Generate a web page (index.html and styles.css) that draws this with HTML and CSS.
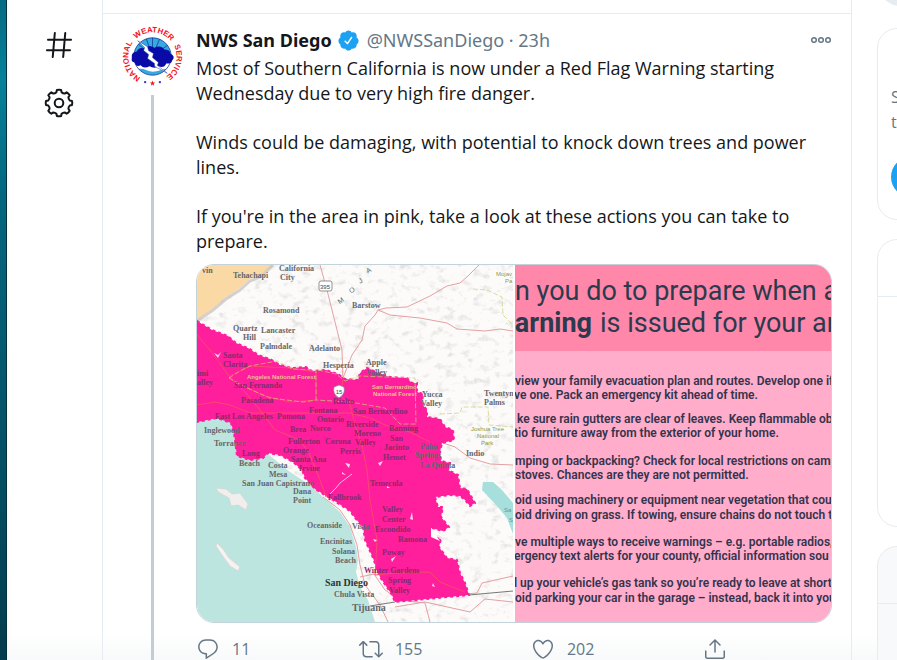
FILE: index.html
```html
<!DOCTYPE html>
<html lang="en">
<head>
  <meta charset="UTF-8">
  <meta name="viewport" content="width=device-width, initial-scale=1.0">
  <title>NWS San Diego on Twitter</title>
  <link rel="stylesheet" href="styles.css">
</head>
<body>
  <div class="desktop-edge"></div>

  <!-- Left navigation -->
  <nav class="nav">
    <a href="#explore" aria-label="Explore">
      <svg class="nav-icon" viewBox="0 0 24 24"><path d="M21 7.337h-3.93l.372-4.272c.036-.412-.27-.775-.682-.812-.417-.03-.776.27-.812.683l-.383 4.4h-6.32l.37-4.27c.037-.413-.27-.776-.68-.813-.42-.03-.777.27-.813.683l-.382 4.4H3.782c-.414 0-.75.337-.75.75s.336.75.75.75H7.61l-.55 6.327H3c-.414 0-.75.336-.75.75s.336.75.75.75h3.93l-.372 4.272c-.036.412.27.775.682.812l.066.003c.385 0 .712-.295.746-.686l.383-4.4h6.32l-.37 4.27c-.036.413.27.776.682.813l.066.003c.385 0 .712-.295.746-.686l.382-4.4h3.957c.413 0 .75-.337.75-.75s-.337-.75-.75-.75H16.39l.55-6.327H21c.414 0 .75-.336.75-.75s-.336-.75-.75-.75zm-6.115 7.826h-6.32l.55-6.326h6.32l-.55 6.326z"/></svg>
    </a>
    <a href="#settings" aria-label="Settings">
      <svg class="nav-icon gear" viewBox="-16 -16 32 32">
        <path d="M-2.1 -13Q0 -13.6 2.1 -13L2.6 -10.7Q3.9 -9.4 5.7 -9.4L7.7 -10.7Q9.6 -9.6 10.7 -7.7L9.4 -5.7Q9.4 -3.9 10.7 -2.6L13 -2.1Q13.6 0 13 2.1L10.7 2.6Q9.4 3.9 9.4 5.7L10.7 7.7Q9.6 9.6 7.7 10.7L5.7 9.4Q3.9 9.4 2.6 10.7L2.1 13Q0 13.6 -2.1 13L-2.6 10.7Q-3.9 9.4 -5.7 9.4L-7.7 10.7Q-9.6 9.6 -10.7 7.7L-9.4 5.7Q-9.4 3.9 -10.7 2.6L-13 2.1Q-13.6 0 -13 -2.1L-10.7 -2.6Q-9.4 -3.9 -9.4 -5.7L-10.7 -7.7Q-9.6 -9.6 -7.7 -10.7L-5.7 -9.4Q-3.9 -9.4 -2.6 -10.7Z"/>
        <circle r="4.3"/>
      </svg>
    </a>
  </nav>

  <!-- Timeline -->
  <main class="timeline">
    <article class="tweet">
      <div class="thread">
        <svg class="avatar" viewBox="-31 -31 62 62">
          <defs>
            <path id="ring" d="M0 24.5A24.5 24.5 0 0 1 0 -24.5A24.5 24.5 0 0 1 0 24.5"/>
            <clipPath id="disc"><circle r="19"/></clipPath>
          </defs>
          <circle r="20" fill="#fff"/>
          <g clip-path="url(#disc)">
            <rect x="-20" y="-20" width="40" height="22" fill="#35a9e0"/>
            <path d="M0 0L-16 -14M0 0L-7 -20M0 0V-20M0 0L8 -20M0 0L16 -12" stroke="#123a9c" stroke-width=".8"/>
            <rect x="-20" y="9" width="40" height="12" fill="#fff"/>
            <path d="M-20 14Q-12 11 -6 14T8 14T20 13V20H-20Z" fill="#35a9e0"/>
          </g>
          <circle r="19" fill="none" stroke="#123a9c" stroke-width=".8"/>
          <path d="M-21 1Q-22 -4 -16 -5Q-14 -10 -8 -8Q-4 -13 2 -9Q9 -12 12 -7Q18 -7 18 -3Q24 0 20 4Q19 8 14 7Q12 12 6 10Q2 13 -3 10Q-9 13 -12 9Q-17 11 -18 6Q-22 6 -21 1Z" fill="#0a0aa8"/>
          <path d="M-15 -16L-5 -10L-4 -6L1 -3L0 1L6 6L5 9L15 17L2 10L2 7L-5 2L-4 -2L-9 -6L-8 -9Z" fill="#fff" stroke="#123a9c" stroke-width=".5"/>
          <g class="ring-text">
            <text><textPath href="#ring" startOffset="21.5%">NATIONAL</textPath></text>
            <text><textPath href="#ring" startOffset="51%">WEATHER</textPath></text>
            <text><textPath href="#ring" startOffset="79%">SERVICE</textPath></text>
          </g>
          <path d="M0 24.5L.7 26.5H2.7L1.1 27.7L1.7 29.7L0 28.5L-1.7 29.7L-1.1 27.7L-2.7 26.5H-.7Z" fill="#f0141c"/>
          <circle cx="-7.5" cy="26" r="1.2" fill="#3a35c8"/>
          <circle cx="7.5" cy="26" r="1.2" fill="#3a35c8"/>
        </svg>
        <div class="thread-line"></div>
      </div>

      <div class="tweet-body">
        <header class="tweet-header">
          <a class="name" href="#profile">NWS San Diego</a>
          <svg class="verified" viewBox="0 0 24 24"><path d="M22.5 12.5c0-1.58-.875-2.95-2.148-3.6.154-.435.238-.905.238-1.4 0-2.21-1.71-3.998-3.818-3.998-.47 0-.92.084-1.336.25C14.818 2.415 13.51 1.5 12 1.5s-2.816.917-3.437 2.25c-.415-.165-.866-.25-1.336-.25-2.11 0-3.818 1.79-3.818 4 0 .494.083.964.237 1.4-1.272.65-2.147 2.018-2.147 3.6 0 1.495.782 2.798 1.942 3.486-.02.17-.032.34-.032.514 0 2.21 1.708 4 3.818 4 .47 0 .92-.086 1.335-.25.62 1.334 1.926 2.25 3.437 2.25 1.512 0 2.818-.916 3.437-2.25.415.163.865.248 1.336.248 2.11 0 3.818-1.79 3.818-4 0-.174-.012-.344-.033-.513 1.158-.687 1.943-1.99 1.943-3.484zm-6.616-3.334l-4.334 6.5c-.145.217-.382.334-.625.334-.143 0-.288-.04-.416-.126l-.115-.094-2.415-2.415c-.293-.293-.293-.768 0-1.06s.768-.294 1.06 0l1.77 1.767 3.825-5.74c.23-.345.696-.436 1.04-.207.346.23.44.696.21 1.04z"/></svg>
          <span class="handle">@NWSSanDiego · 23h</span>
          <button class="more" aria-label="More">
            <svg viewBox="0 0 22 8"><circle cx="4" cy="4" r="2.3"/><circle cx="11" cy="4" r="2.3"/><circle cx="18" cy="4" r="2.3"/></svg>
          </button>
        </header>

        <div class="tweet-text">
          <p>Most of Southern California is now under a Red Flag Warning starting Wednesday due to very high fire danger.</p>
          <p>Winds could be damaging, with potential to knock down trees and power lines.</p>
          <p>If you're in the area in pink, take a look at these actions you can take to prepare.</p>
        </div>

        <div class="photos">
          <!-- Warning area map -->
          <svg class="photo map" viewBox="197 265 316 357" preserveAspectRatio="xMidYMid slice">
            <defs>
              <filter id="relief" x="0" y="0" width="100%" height="100%">
                <feTurbulence type="fractalNoise" baseFrequency=".11 .14" numOctaves="4" seed="8"/>
                <feColorMatrix values="0 0 0 0 .6  0 0 0 0 .59  0 0 0 0 .57  2.4 0 0 0 -1.3"/>
              </filter>
            </defs>
            <rect x="197" y="265" width="316" height="357" fill="#fcfbfa"/>
            <rect x="197" y="265" width="316" height="357" filter="url(#relief)" opacity=".7"/>
            <path d="M197 265H273L262 274L250 279L240 288L226 297L213 308L197 320Z" fill="#fbd9a5"/>
            <path d="M273 265L262 276L250 281L240 290L226 299L213 310L197 321" fill="none" stroke="#b9b5b0" stroke-width="3" opacity=".6"/>
            <!-- ocean and Salton Sea -->
            <path d="M197 418H235L250 455L268 454L290 472L313 487L323 497L340 512L350 527L356 547L358 560L356 572L360 587L368 600L375 622H197Z" fill="#bde5df"/>
            <path d="M483 482L493 482L502 490L513 503V534L507 518L497 506L482 490Z" fill="#a6dfdb"/>
            <path d="M216 488L226 489L232 494L240 493L248 504L246 510L238 505L231 506L229 498L218 492Z" fill="#f0efed" stroke="#d5d2ce" stroke-width=".7"/>
            <path d="M217 543L223 549L229 558L240 567L238 571L230 566L222 555L216 546Z" fill="#f4f3f1" stroke="#d5d2ce" stroke-width=".7"/>
            <!-- roads outside of the area -->
            <g class="road">
              <path d="M320 265L327 290L334 318L342 350L343 380"/>
              <path d="M343 378L352 355L362 340L365 326L375 315L378 310L386 308L407 307L430 296L447 286L460 283L468 276L479 265"/>
              <path d="M378 310L390 315L420 318L447 323L457 329L485 331L500 329L513 331"/>
              <path d="M323 497L340 510L350 525L357 545L360 565L365 585L380 605L388 622M360 577L374 574L385 590L400 600L425 603L430 622"/>
              <path d="M440 442L455 447L470 458L490 464L513 465M466 594L477 593L482 583L513 576M395 607L425 602L470 612L485 599L513 602"/>
            </g>
            <!-- red flag warning area -->
            <path class="zone" d="M197 321L212 330L228 336L236 343L250 349L258 355L270 359L280 365L292 368L306 367L312 371L326 370L338 374L345 379L358 380L360 373L367 368L378 373L390 377L407 378L412 383L417 383L417 392L423 394L422 404L427 410L427 417L440 419L445 427L453 430L454 440L442 443L440 452L441 461L450 463L448 470L458 475L460 488L467 489L475 503L470 506L465 500L460 496L450 495L435 497L438 507L443 507L441 517L449 527L443 531L431 528L431 537L441 539L439 547L447 558L457 560L460 573L465 583L469 595L395 602L392 595L380 577L373 558L365 540L363 527L355 518L350 511L333 500L315 489L305 478L302 470L293 462L280 455L268 453L263 458L250 460L237 456L234 433L231 423L217 418L197 422Z"/>
            <path d="M431 528L445 538L434 533L440 541L431 537Z" fill="#fff"/>
            <g class="zone-road">
              <path d="M197 335L210 350L229 376L245 392L260 410L275 430L300 440L310 455L320 480L326 497"/>
              <path d="M197 405L215 402L230 405L250 413L350 413L370 418L385 425L410 432L430 442"/>
              <path d="M343 380L340 395L350 405L355 425L362 445L367 470L370 500L377 540L375 575L395 573L430 572L440 582L465 592"/>
              <path d="M230 376L250 366L290 368L316 372L316 400L290 402L262 395L232 380"/>
            </g>
            <g class="forest-line">
              <path d="M229 378L240 371L250 366L277 361L292 369L316 370V400L303 402L270 398L245 387Z"/>
              <path d="M318 370L336 374L345 381L360 376L415 378L416 424L400 424L385 408L350 402L316 400"/>
              <path d="M440 414L460 413L462 407H488L489 425L513 427M473 289L487 290L502 297L503 315L513 325"/>
            </g>
            <path d="M469 595L513 591M395 602L370 606" stroke="#777" stroke-width="1" fill="none"/>
            <g fill="#fbd3ee">
              <path d="M214 353L218 358L221 352L218 355Z"/><path d="M412 512L413 520L410 519Z"/><path d="M345 463L350 464L349 468Z"/><path d="M342 472L346 475L342 474Z"/><path d="M378 463L383 461L380 466Z"/><path d="M387 486L390 488L387 488Z"/><path d="M373 539L377 540L375 542Z"/><path d="M433 583L435 587L432 586Z"/><path d="M391 559L396 556L392 562Z"/>
            </g>
            <path d="M330 494L336 488L340 483L352 474" stroke="#f4bedd" fill="none"/>
            <!-- highway shields -->
            <rect x="319" y="281" width="13" height="10" rx="2" fill="#fff" stroke="#777" stroke-width=".8"/>
            <text class="shield" x="325" y="289">395</text>
            <path d="M334 387L339 385L344 387Q346 394 339 398Q332 394 334 387Z" fill="#fff" stroke="#8b7b99" stroke-width=".8"/>
            <text class="shield" x="339" y="394">15</text>

            <g class="labels">
              <text x="202" y="273">vin</text><text x="233" y="278">Tehachapi</text>
              <text x="279" y="271">California</text><text x="280" y="280">City</text>
              <text x="263" y="313">Rosamond</text><text x="352" y="308">Barstow</text>
              <text x="233" y="331">Quartz</text><text x="243" y="340">Hill</text>
              <text x="261" y="333">Lancaster</text><text x="260" y="349">Palmdale</text>
              <text x="309" y="351">Adelanto</text><text x="323" y="368">Hesperia</text>
              <text x="366" y="365">Apple</text><text x="366" y="375">Valley</text>
              <text x="422" y="397">Yucca</text><text x="421" y="406">Valley</text>
              <text x="484" y="396">Twentyn</text><text x="484" y="405">Palms</text>
              <text x="204" y="433">Inglewood</text><text x="214" y="446">Torrance</text>
              <text x="239" y="466">Beach</text><text x="268" y="468">Costa</text>
              <text x="269" y="477">Mesa</text><text x="242" y="486">San Juan Capistrano</text>
              <text x="293" y="494">Dana</text><text x="293" y="503">Point</text>
              <text x="307" y="528">Oceanside</text><text x="352" y="529">Vista</text>
              <text x="320" y="544">Encinitas</text><text x="332" y="554">Solana</text>
              <text x="335" y="563">Beach</text><text x="334" y="597">Chula Vista</text>
              <text x="466" y="456">Indio</text><text x="420" y="449">Palm</text>
              <text x="415" y="458">Springs</text><text x="420" y="468">La Quinta</text>
              <text class="city" x="325" y="586">San Diego</text>
              <text class="town" x="352" y="611">Tijuana</text>
            </g>
            <g class="labels inside">
              <text x="223" y="358">Santa</text><text x="223" y="367">Clarita</text>
              <text x="197" y="376">imi</text><text x="197" y="385">alley</text>
              <text x="234" y="388">San Fernando</text><text x="241" y="403">Pasadena</text>
              <text x="215" y="419">East Los Angeles</text><text x="277" y="419">Pomona</text>
              <text x="309" y="413">Fontana</text><text x="333" y="404">Rialto</text>
              <text x="317" y="422">Ontario</text><text x="353" y="414">San Bernardino</text>
              <text x="290" y="432">Brea</text><text x="310" y="431">Norco</text>
              <text x="346" y="427">Riverside</text><text x="354" y="436">Moreno</text>
              <text x="389" y="431">Banning</text><text x="390" y="441">San</text>
              <text x="355" y="445">Valley</text><text x="384" y="450">Jacinto</text>
              <text x="383" y="460">Hemet</text><text x="288" y="444">Fullerton</text>
              <text x="325" y="444">Corona</text><text x="283" y="453">Orange</text>
              <text x="291" y="462">Santa Ana</text><text x="299" y="471">Irvine</text>
              <text x="340" y="454">Perris</text><text x="242" y="456">Long</text>
              <text x="370" y="486">Temecula</text><text x="328" y="500">Fallbrook</text>
              <text x="382" y="512">Valley</text><text x="382" y="522">Center</text>
              <text x="375" y="532">Escondido</text><text x="398" y="542">Ramona</text>
              <text x="382" y="555">Poway</text><text x="364" y="573">Winter Gardens</text>
              <text x="388" y="583">Spring</text><text x="389" y="593">Valley</text>
            </g>
            <g class="desert">
              <text x="338" y="303" transform="rotate(-35 341 301)">M</text><text x="349" y="293" transform="rotate(-30 351 290)">O</text><text x="359" y="283" transform="rotate(-30 361 281)">J</text><text x="366" y="273" transform="rotate(-30 368 270)">A</text>
            </g>
            <g class="park">
              <text x="496" y="276">Mojav</text><text x="505" y="283">Pa</text>
              <text x="471" y="431">Joshua Tree</text><text x="477" y="438">National</text><text x="481" y="445">Park</text>
              <text class="forest" x="247" y="379">Angeles National Forest</text>
              <text class="forest" x="372" y="389">San Bernardino</text><text class="forest" x="373" y="396">National Forest</text>
              <text class="lake" x="504" y="512">Sa</text><text class="lake" x="509" y="522">S</text>
            </g>
          </svg>

          <!-- Safety tips flyer -->
          <svg class="photo flyer" viewBox="515 265 316 357" preserveAspectRatio="xMidYMid slice">
            <rect x="515" y="265" width="316" height="357" fill="#ffadcb"/>
            <rect x="515" y="265" width="316" height="86" fill="#ff87a9"/>
            <g class="flyer-title">
              <text x="515" y="300">n you do to prepare when a</text>
              <text x="592" y="332" text-anchor="end" font-weight="700">Warning</text>
              <text x="600" y="332">is issued for your ar</text>
            </g>
            <g class="flyer-text">
              <text x="515" y="385">view your family evacuation plan and routes. Develop one if</text>
              <text x="514" y="399">ve one. Pack an emergency kit ahead of time.</text>
              <text x="517" y="423">ke sure rain gutters are clear of leaves. Keep flammable ob</text>
              <text x="514" y="437">tio furniture away from the exterior of your home.</text>
              <text x="515" y="465">mping or backpacking? Check for local restrictions on camp</text>
              <text x="515" y="479">stoves. Chances are they are not permitted.</text>
              <text x="515" y="504">oid using machinery or equipment near vegetation that coul</text>
              <text x="515" y="519">oid driving on grass. If towing, ensure chains do not touch th</text>
              <text x="515" y="546">ve multiple ways to receive warnings – e.g. portable radios,</text>
              <text x="514" y="560">ergency text alerts for your county, official information sou</text>
              <text x="514" y="587">l up your vehicle’s gas tank so you’re ready to leave at short</text>
              <text x="515" y="602">oid parking your car in the garage – instead, back it into you</text>
            </g>
          </svg>
        </div>

        <div class="actions">
          <button aria-label="Reply">
            <svg viewBox="0 0 24 24"><path d="M14.046 2.242l-4.148-.01h-.002c-4.374 0-7.8 3.427-7.8 7.802 0 4.098 3.186 7.206 7.465 7.37v3.828c0 .108.044.286.12.403.142.225.384.347.632.347.138 0 .277-.038.402-.118.264-.168 6.473-4.14 8.088-5.506 1.902-1.61 3.04-3.97 3.043-6.312v-.017c-.006-4.367-3.43-7.787-7.8-7.788zm3.787 12.972c-1.134.96-4.862 3.405-6.772 4.643V16.67c0-.414-.335-.75-.75-.75h-.396c-3.66 0-6.318-2.476-6.318-5.886 0-3.534 2.768-6.302 6.3-6.302l4.147.01h.002c3.532 0 6.3 2.766 6.302 6.296-.003 1.91-.942 3.844-2.514 5.176z"/></svg>
            <span>11</span>
          </button>
          <button aria-label="Retweet">
            <svg viewBox="0 0 24 24"><path d="M23.77 15.67c-.292-.293-.767-.293-1.06 0l-2.22 2.22V7.65c0-2.068-1.683-3.75-3.75-3.75h-5.85c-.414 0-.75.336-.75.75s.336.75.75.75h5.85c1.24 0 2.25 1.01 2.25 2.25v10.24l-2.22-2.22c-.293-.293-.768-.293-1.06 0s-.294.768 0 1.06l3.5 3.5c.145.147.337.22.53.22s.383-.072.53-.22l3.5-3.5c.294-.292.294-.767 0-1.06zm-10.66 3.28H7.26c-1.24 0-2.25-1.01-2.25-2.25V6.46l2.22 2.22c.148.147.34.22.532.22s.384-.073.53-.22c.293-.293.293-.768 0-1.06l-3.5-3.5c-.293-.294-.768-.294-1.06 0l-3.5 3.5c-.294.292-.294.767 0 1.06s.767.293 1.06 0l2.22-2.22V16.7c0 2.068 1.683 3.75 3.75 3.75h5.85c.414 0 .75-.336.75-.75s-.337-.75-.75-.75z"/></svg>
            <span>155</span>
          </button>
          <button aria-label="Like">
            <svg viewBox="0 0 24 24"><path d="M12 21.638h-.014C9.403 21.59 1.95 14.856 1.95 8.478c0-3.064 2.525-5.754 5.403-5.754 2.29 0 3.83 1.58 4.646 2.73.814-1.148 2.354-2.73 4.645-2.73 2.88 0 5.404 2.69 5.404 5.755 0 6.376-7.454 13.11-10.037 13.157H12zM7.354 4.225c-2.08 0-3.903 1.988-3.903 4.255 0 5.74 7.034 11.596 8.55 11.658 1.518-.062 8.55-5.917 8.55-11.658 0-2.267-1.823-4.255-3.903-4.255-2.528 0-3.94 2.936-3.952 2.965-.23.562-1.156.562-1.387 0-.014-.03-1.425-2.965-3.954-2.965z"/></svg>
            <span>202</span>
          </button>
          <button aria-label="Share">
            <svg viewBox="0 0 24 24"><path d="M17.53 7.47l-5-5c-.293-.293-.768-.293-1.06 0l-5 5c-.294.293-.294.768 0 1.06s.767.294 1.06 0l3.72-3.72V15c0 .414.336.75.75.75s.75-.336.75-.75V4.81l3.72 3.72c.146.147.338.22.53.22s.384-.072.53-.22c.293-.293.293-.767 0-1.06z"/><path d="M19.708 21.944H4.292C3.028 21.944 2 20.916 2 19.652V14c0-.414.336-.75.75-.75s.75.336.75.75v5.652c0 .437.355.792.792.792h15.416c.437 0 .792-.355.792-.792V14c0-.414.336-.75.75-.75s.75.336.75.75v5.652c0 1.264-1.028 2.292-2.292 2.292z"/></svg>
          </button>
        </div>
      </div>
    </article>
  </main>

  <!-- Right column, runs past the edge of the window -->
  <aside class="sidebar">
    <div class="search"></div>
    <section class="card signup">
      <p>Sign up now to get your own personalized<br>timeline!</p>
      <button class="signup-button" aria-label="Sign up"></button>
    </section>
    <section class="card people">
      <div class="card-head"></div>
    </section>
    <section class="card trends">
      <div class="card-head"></div>
    </section>
  </aside>
</body>
</html>
```
FILE: styles.css
```css
* {
  margin: 0;
  padding: 0;
  box-sizing: border-box;
}

body {
  display: flex;
  height: 100vh;
  overflow: hidden;
  font-family: "Open Sans", "Noto Sans", sans-serif;
  font-size: 18px;
  color: #14171a;
  background: linear-gradient(#fff 96%, #f8f9fa);
}

button {
  border: none;
  background: none;
  font: inherit;
  color: inherit;
  cursor: pointer;
}

a {
  color: inherit;
  text-decoration: none;
}

svg {
  display: block;
}

.desktop-edge {
  flex: none;
  width: 7px;
  background: linear-gradient(#066a83, #07819a 12%, #04667f 30%, #04566c 60%, #033c4d);
  border-right: 1px solid #03303f;
}

/* Navigation */
.nav {
  flex: none;
  width: 95px;
  padding: 29px 0 0 36px;
  display: flex;
  flex-direction: column;
  gap: 26px;
}

.nav-icon {
  width: 32px;
  height: 32px;
  fill: #14171a;
}

.gear {
  fill: none;
  stroke: #14171a;
  stroke-width: 2;
  stroke-linejoin: round;
}

/* Timeline */
.timeline {
  flex: 1;
  min-width: 0;
  padding-top: 13px;
  border-left: 1px solid #e6ecf0;
  border-right: 1px solid #e6ecf0;
  display: flex;
}

.tweet {
  flex: 1;
  min-width: 0;
  display: flex;
  gap: 13px;
  padding: 12px 19px 0;
  border-top: 1px solid #e6ecf0;
}

.thread {
  flex: none;
  display: flex;
  flex-direction: column;
  align-items: center;
  gap: 8px;
}

.avatar {
  width: 61px;
  height: 61px;
}

.thread-line {
  flex: 1;
  width: 3px;
  background: #c0cdd6;
}

.ring-text {
  font-family: "Liberation Sans", sans-serif;
  font-size: 8px;
  font-weight: 700;
  fill: #f0141c;
  text-anchor: middle;
}

.tweet-body {
  flex: 1;
  min-width: 0;
}

.tweet-header {
  display: flex;
  align-items: center;
  height: 28px;
  margin-bottom: 2px;
  font-family: "Noto Sans", "Open Sans", sans-serif;
}

.name {
  font-weight: 700;
}

.verified {
  width: 23px;
  height: 23px;
  margin: 0 7px 0 5px;
  fill: #1da1f2;
}

.handle {
  color: #657786;
}

.more {
  margin-left: auto;
}

.more svg {
  width: 22px;
  height: 8px;
  fill: none;
  stroke: #657786;
  stroke-width: 1.5;
}

.tweet-text {
  line-height: 25px;
}

.tweet-text p + p {
  margin-top: 24px;
}

.photos {
  margin-top: 10px;
  display: grid;
  grid-template-columns: 1fr 1fr;
  gap: 2px;
  aspect-ratio: 636 / 359;
  border: 1px solid #c4d2dc;
  border-radius: 18px;
  overflow: hidden;
}

.photo {
  width: 100%;
  height: 100%;
  min-height: 0;
}

/* Map */
.zone {
  fill: #ff1e9c;
  stroke: #ff1e9c;
  stroke-width: 2;
  stroke-dasharray: 3 3;
}

.road {
  fill: none;
  stroke: #e3a0a2;
  stroke-width: 1;
}

.zone-road {
  fill: none;
  stroke: #fa4a6c;
  stroke-width: 1;
}

.forest-line {
  fill: none;
  stroke: #c9cf74;
  stroke-width: 1;
  stroke-dasharray: 5 2;
  opacity: .7;
}

.labels {
  font-family: "Liberation Serif", serif;
  font-size: 8px;
  font-weight: 700;
  fill: #66666a;
}

.inside {
  fill: #8a2a68;
}

.city {
  font-size: 10px;
  fill: #333;
}

.town {
  font-size: 10px;
}

.shield {
  font-family: "Liberation Sans", sans-serif;
  font-size: 6px;
  fill: #444;
  text-anchor: middle;
}

.desert {
  font-family: "Liberation Sans", sans-serif;
  font-size: 7px;
  fill: #666;
}

.park {
  font-family: "Liberation Sans", sans-serif;
  font-size: 6px;
  fill: #8f9a45;
}

.forest {
  font-weight: 700;
  fill: #e9c38c;
}

.lake {
  fill: #5c9ba0;
}

/* Flyer */
.flyer-title {
  font-family: Roboto, sans-serif;
  font-size: 27px;
  fill: #2b3a4d;
}

.flyer-text {
  font-family: Roboto, sans-serif;
  font-size: 12px;
  font-weight: 600;
  fill: #33344c;
}

/* Tweet actions */
.actions {
  display: flex;
  justify-content: space-between;
  max-width: 531px;
  margin-top: 14px;
  color: #657786;
  font-size: 16px;
}

.actions button {
  display: flex;
  align-items: center;
  gap: 12px;
}

.actions svg {
  width: 24px;
  height: 24px;
  fill: #657786;
}

/* Right column */
.sidebar {
  flex: none;
  width: 45px;
  padding-left: 25px;
  overflow: hidden;
}

.search {
  width: 350px;
  height: 48px;
  margin-top: -42px;
  border-radius: 24px;
  background: #e6ecf0;
}

.card {
  width: 350px;
  border: 1px solid #e6ecf0;
  border-radius: 20px;
  overflow: hidden;
}

.signup {
  height: 192px;
  margin-top: 22px;
  padding: 56px 13px 0;
  color: #657786;
  font-size: 16px;
  line-height: 25px;
}

.signup-button {
  display: block;
  width: 100%;
  height: 40px;
  margin-top: 22px;
  border-radius: 20px;
  background: #1da1f2;
}

.people {
  height: 288px;
  margin-top: 19px;
}

.card-head {
  height: 57px;
  border-bottom: 1px solid #e6ecf0;
}

.trends {
  height: 400px;
  margin-top: 19px;
  background: #f7f9fa;
}
```
